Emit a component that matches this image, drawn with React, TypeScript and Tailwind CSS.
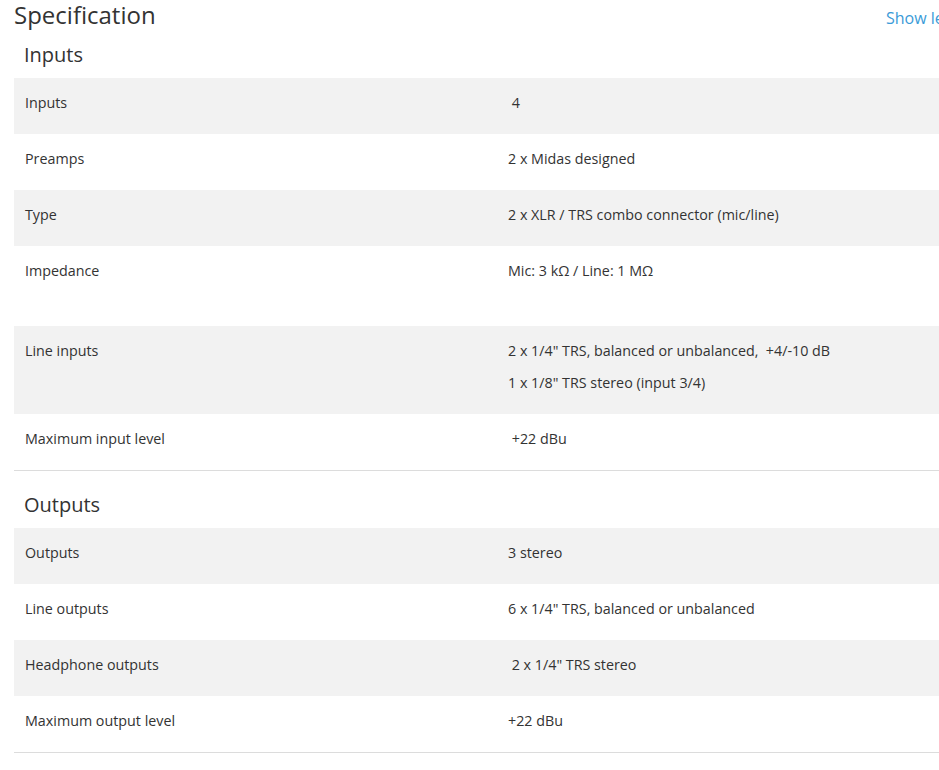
const FONT = "font-['Open_Sans','Liberation_Sans',sans-serif]";

type Row = {
  label: string;
  values: string[];
  extra?: boolean;
};

type Section = {
  title: string;
  rows: Row[];
};

const sections: Section[] = [
  {
    title: "Inputs",
    rows: [
      { label: "Inputs", values: [" 4"] },
      { label: "Preamps", values: ["2 x Midas designed"] },
      { label: "Type", values: ["2 x XLR / TRS combo connector (mic/line)"] },
      { label: "Impedance", values: ["Mic: 3 kΩ / Line: 1 MΩ"], extra: true },
      {
        label: "Line inputs",
        values: ["2 x 1/4\" TRS, balanced or unbalanced,  +4/-10 dB", "1 x 1/8\" TRS stereo (input 3/4)"],
      },
      { label: "Maximum input level", values: [" +22 dBu"] },
    ],
  },
  {
    title: "Outputs",
    rows: [
      { label: "Outputs", values: ["3 stereo"] },
      { label: "Line outputs", values: ["6 x 1/4\" TRS, balanced or unbalanced"] },
      { label: "Headphone outputs", values: [" 2 x 1/4\" TRS stereo"] },
      { label: "Maximum output level", values: ["+22 dBu"] },
    ],
  },
];

function SpecSection({ section, first }: { section: Section; first: boolean }) {
  return (
    <div className="border-b border-[#dcdcdc]">
      <h3
        className={`${first ? "mt-[9px]" : "mt-[20px]"} mb-[9px] pl-[10px] text-[20px] leading-[28px] text-[#333]`}
      >
        {section.title}
      </h3>
      {section.rows.map((row, i) => (
        <div key={row.label} className={`grid grid-cols-2 ${i % 2 === 0 ? "bg-[#f2f2f2]" : "bg-white"}`}>
          <div className="pl-[11px] pt-[13px] pb-[11px] text-[14.3px] leading-[24px] text-[#333]">
            <p className="mb-2">{row.label}</p>
          </div>
          <div className="pl-[11px] pt-[13px] pb-[11px] text-[14.3px] leading-[24px] text-[#333]">
            {row.values.map((v) => (
              <p key={v} className="mb-2 whitespace-pre-wrap">
                {v}
              </p>
            ))}
            {row.extra ? <div className="h-6" /> : null}
          </div>
        </div>
      ))}
    </div>
  );
}

export default function App() {
  return (
    <div className={`w-[939px] min-h-[770px] overflow-hidden bg-white ${FONT}`}>
      <div className="ml-[14px] w-[966px]">
        <div className="flex h-[32px] items-start">
          <h2 className="text-[24px] leading-[30px] text-[#333]">Specification</h2>
          <a href="#" className="ml-auto mr-[21px] mt-[8px] text-[16px] leading-[20px] text-[#3b9bd8]">
            Show less
          </a>
        </div>
        {sections.map((s, i) => (
          <SpecSection key={s.title} section={s} first={i === 0} />
        ))}
      </div>
    </div>
  );
}
